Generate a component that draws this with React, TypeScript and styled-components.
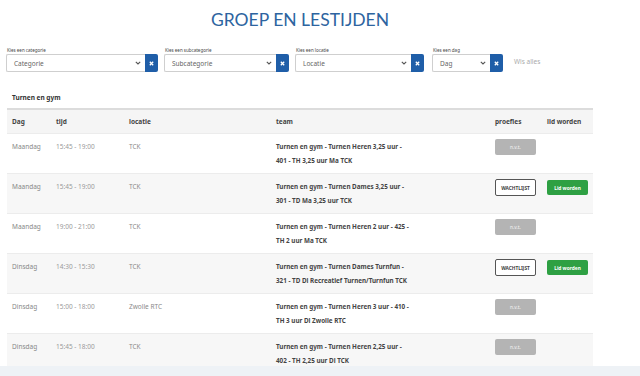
import React from 'react';
import styled, { createGlobalStyle } from 'styled-components';

const GlobalStyle = createGlobalStyle`
  html, body {
    margin: 0;
    padding: 0;
    background: #ffffff;
    font-family: "Noto Sans", "Open Sans", sans-serif;
  }
`;

const Page = styled.div`
  width: 640px;
  height: 376px;
  overflow: hidden;
  display: flex;
  flex-direction: column;
`;

const Main = styled.div`
  height: 366px;
  overflow: hidden;
  flex-shrink: 0;
`;

const Footer = styled.div`
  flex: 1;
  background: #eef2f6;
`;

const Title = styled.h1`
  margin: 0;
  padding-top: 9px;
  height: 36px;
  box-sizing: border-box;
  text-align: center;
  font-family: Lato, "Noto Sans", sans-serif;
  font-weight: 400;
  font-size: 17.5px;
  color: #2d64a0;
  padding-right: 40px;
`;

const Filters = styled.div`
  display: flex;
  align-items: flex-end;
  padding: 11px 0 0 6px;
  height: 36px;
  box-sizing: border-box;
`;

const FilterGroup = styled.div<{ $gap: number }>`
  display: flex;
  flex-direction: column;
  margin-right: ${(p) => p.$gap}px;
`;

const FilterLabel = styled.label`
  font-size: 4.5px;
  color: #444;
  height: 7px;
  line-height: 7px;
  padding-left: 1px;
`;

const FilterRow = styled.div`
  display: flex;
`;

const SelectBox = styled.div<{ $w: number }>`
  width: ${(p) => p.$w}px;
  height: 18px;
  box-sizing: border-box;
  border: 1px solid #cfcfcf;
  border-right: none;
  border-radius: 2px 0 0 2px;
  display: flex;
  align-items: center;
  justify-content: space-between;
  padding: 0 4px 0 7px;
  font-size: 6.5px;
  color: #666;
`;

const ClearButton = styled.div`
  width: 13px;
  height: 18px;
  background: #1f5ea8;
  border-radius: 0 2px 2px 0;
  display: flex;
  align-items: center;
  justify-content: center;
`;

const ClearAll = styled.div`
  font-size: 6.5px;
  color: #aaa;
  height: 18px;
  line-height: 16px;
`;

const SectionTitle = styled.div`
  font-weight: 700;
  font-size: 6.5px;
  color: #333;
  padding: 21px 0 0 12px;
  height: 36px;
  box-sizing: border-box;
`;

const Table = styled.div`
  margin-left: 7px;
  width: 586px;
`;

const cols = '44px 73px 147px 219px 52px 51px';

const HeadRow = styled.div`
  display: grid;
  grid-template-columns: ${cols};
  height: 25px;
  align-items: center;
  background: #f5f5f5;
  border-top: 2px solid #dcdcdc;
  box-sizing: border-box;
  font-weight: 700;
  font-size: 6.5px;
  color: #444;
`;

const HeadCell = styled.div`
  padding-left: 5px;
`;

const Row = styled.div<{ $shade: boolean }>`
  display: grid;
  grid-template-columns: ${cols};
  height: 40px;
  box-sizing: border-box;
  background: ${(p) => (p.$shade ? '#f7f7f7' : '#ffffff')};
  border-top: 1px solid #ececec;
  font-size: 6.5px;
`;

const Cell = styled.div<{ $tone?: string }>`
  padding: 9px 0 0 5px;
  color: ${(p) => p.$tone || '#888'};
  line-height: 8px;
`;

const TeamCell = styled.div`
  padding: 9px 0 0 5px;
  font-weight: 700;
  font-size: 6.3px;
  color: #444;
  line-height: 14px;
  margin-top: -3px;
`;

const TeamLine = styled.div`
  white-space: nowrap;
`;

const ActionCell = styled.div`
  padding: 5px 0 0 5px;
`;

const Btn = styled.div<{ $kind: 'nvt' | 'wait' | 'join' }>`
  width: 41px;
  height: 16px;
  box-sizing: border-box;
  border-radius: 2px;
  display: flex;
  align-items: center;
  justify-content: center;
  font-size: 4.8px;
  font-weight: 700;
  ${(p) =>
    p.$kind === 'nvt'
      ? 'background:#b4b4b4;color:#f4f4f4;font-weight:400;'
      : p.$kind === 'wait'
      ? 'background:#fff;border:1px solid #555;color:#444;height:17px;'
      : 'background:#2ea043;color:#fff;width:41px;height:15px;margin-top:1px;'}
`;

const Chevron = () => (
  <svg width="6" height="4" viewBox="0 0 6 4">
    <path d="M0.8 0.8 L3 3 L5.2 0.8" fill="none" stroke="#555" strokeWidth="1.1" />
  </svg>
);

const Cross = () => (
  <svg width="5" height="5" viewBox="0 0 5 5">
    <path d="M0.8 0.8 L4.2 4.2 M4.2 0.8 L0.8 4.2" stroke="#fff" strokeWidth="1.3" />
  </svg>
);

type Filter = { label: string; value: string; w: number; gap: number };

const filters: Filter[] = [
  { label: 'Kies een categorie', value: 'Categorie', w: 139, gap: 6 },
  { label: 'Kies een subcategorie', value: 'Subcategorie', w: 112, gap: 6 },
  { label: 'Kies een locatie', value: 'Locatie', w: 116, gap: 8 },
  { label: 'Kies een dag', value: 'Dag', w: 58, gap: 11 },
];

type Lesson = {
  day: string;
  time: string;
  place: string;
  team: [string, string];
  open: boolean;
};

const lessons: Lesson[] = [
  { day: 'Maandag', time: '15:45 - 19:00', place: 'TCK', team: ['Turnen en gym - Turnen Heren 3,25 uur -', '401 - TH 3,25 uur Ma TCK'], open: false },
  { day: 'Maandag', time: '15:45 - 19:00', place: 'TCK', team: ['Turnen en gym - Turnen Dames 3,25 uur -', '301 - TD Ma 3,25 uur TCK'], open: true },
  { day: 'Maandag', time: '19:00 - 21:00', place: 'TCK', team: ['Turnen en gym - Turnen Heren 2 uur - 425 -', 'TH 2 uur Ma TCK'], open: false },
  { day: 'Dinsdag', time: '14:30 - 15:30', place: 'TCK', team: ['Turnen en gym - Turnen Dames Turnfun -', '321 - TD Di Recreatief Turnen/Turnfun TCK'], open: true },
  { day: 'Dinsdag', time: '15:00 - 18:00', place: 'Zwolle RTC', team: ['Turnen en gym - Turnen Heren 3 uur - 410 -', 'TH 3 uur Di Zwolle RTC'], open: false },
  { day: 'Dinsdag', time: '15:45 - 18:00', place: 'TCK', team: ['Turnen en gym - Turnen Heren 2,25 uur -', '402 - TH 2,25 uur Di TCK'], open: false },
];

export default function App() {
  return (
    <Page>
      <GlobalStyle />
      <Main>
        <Title>GROEP EN LESTIJDEN</Title>
        <Filters>
          {filters.map((f) => (
            <FilterGroup key={f.label} $gap={f.gap}>
              <FilterLabel>{f.label}</FilterLabel>
              <FilterRow>
                <SelectBox $w={f.w}>
                  <span>{f.value}</span>
                  <Chevron />
                </SelectBox>
                <ClearButton>
                  <Cross />
                </ClearButton>
              </FilterRow>
            </FilterGroup>
          ))}
          <ClearAll>Wis alles</ClearAll>
        </Filters>
        <SectionTitle>Turnen en gym</SectionTitle>
        <Table>
          <HeadRow>
            <HeadCell>Dag</HeadCell>
            <HeadCell>tijd</HeadCell>
            <HeadCell>locatie</HeadCell>
            <HeadCell>team</HeadCell>
            <HeadCell>proefles</HeadCell>
            <HeadCell>lid worden</HeadCell>
          </HeadRow>
          {lessons.map((l, i) => (
            <Row key={i} $shade={i % 2 === 1}>
              <Cell>{l.day}</Cell>
              <Cell $tone="#9a9a9a">{l.time}</Cell>
              <Cell $tone="#8a8a8a">{l.place}</Cell>
              <TeamCell>
                <TeamLine>{l.team[0]}</TeamLine>
                <TeamLine>{l.team[1]}</TeamLine>
              </TeamCell>
              <ActionCell>
                {l.open ? <Btn $kind="wait">WACHTLIJST</Btn> : <Btn $kind="nvt">n.v.t.</Btn>}
              </ActionCell>
              <ActionCell>{l.open && <Btn $kind="join">Lid worden</Btn>}</ActionCell>
            </Row>
          ))}
        </Table>
      </Main>
      <Footer />
    </Page>
  );
}
